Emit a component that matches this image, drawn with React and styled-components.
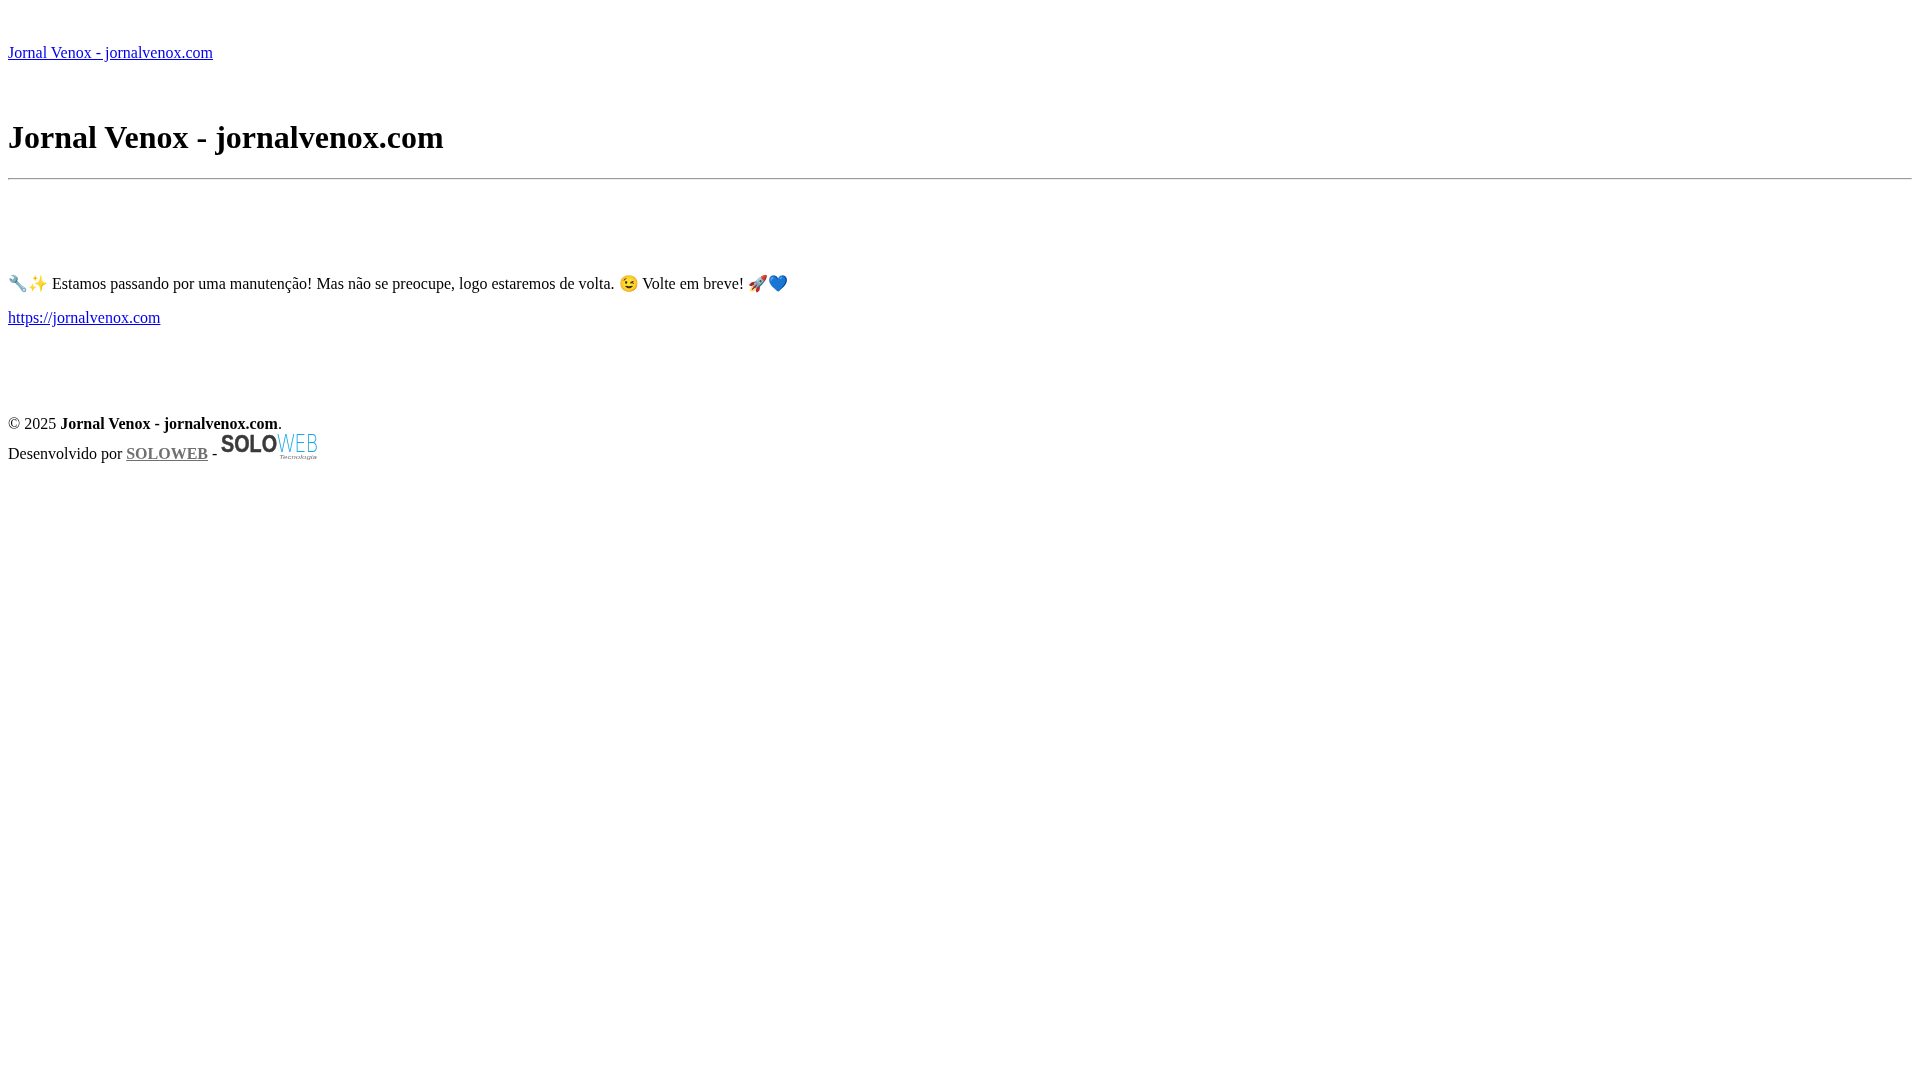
import styled, { createGlobalStyle } from "styled-components";

const Global = createGlobalStyle`
html, body {
  margin: 0;
  background: #fff;
}
body {
  padding: 8px;
  color: #000;
  font-family: "Liberation Serif", "Times New Roman", serif;
  font-size: 16px;
}
#root {
  will-change: transform;
}
`

const Header = styled.header`
padding-top: 36px;
`
const Site = styled.p`
margin: 0;
`
const Title = styled.h1`
margin: 57px 0 0;
font-size: 32px;
font-weight: bold;
line-height: 37px;
`
const Rule = styled.hr`
margin: 22px 0 0;
`
const Main = styled.main`
padding-top: 94px;
`
const Message = styled.p`
margin: 0 0 16px;
`
const Link = styled.a`
color: #00e;
text-decoration: underline;
`
const Footer = styled.footer`
margin-top: 88px;
`
const Dev = styled.a`
color: #707070;
font-weight: bold;
text-decoration: underline;
`
const Logo = styled.svg`
width: 98px;
height: 26px;
overflow: visible;
vertical-align: baseline;
`

const SoloLogo = () => (
    <Logo viewBox="0 0 98 26" role="img" aria-label="Soloweb Tecnologia">
        <text x="0" y="19" fontFamily="Liberation Sans" fontWeight="bold" fontSize="24.5" fill="#3a3a3a" stroke="#3a3a3a" strokeWidth="0.5" textLength="56" lengthAdjust="spacingAndGlyphs">SOLO</text>
        <text x="56" y="19" fontFamily="Inter" fontWeight="200" fontSize="24.5" fill="#1ba8e6" textLength="41" lengthAdjust="spacingAndGlyphs">WEB</text>
        <text x="58" y="25.5" fontFamily="Liberation Sans" fontStyle="italic" fontSize="6" fill="#777" textLength="38" lengthAdjust="spacingAndGlyphs">Tecnologia</text>
    </Logo>
)

const App = () => {
    return (
        <>
            <Global />
            <Header>
                <Site><Link href="#">Jornal Venox - jornalvenox.com</Link></Site>
                <Title>Jornal Venox - jornalvenox.com</Title>
                <Rule />
            </Header>
            <Main>
                <Message>🔧✨ Estamos passando por uma manutenção! Mas não se preocupe, logo estaremos de volta. 😉 Volte em breve! 🚀💙</Message>
                <Message><Link href="#">https://jornalvenox.com</Link></Message>
            </Main>
            <Footer>
                © 2025 <strong>Jornal Venox - jornalvenox.com</strong>.<br />
                Desenvolvido por <Dev href="#">SOLOWEB</Dev> - <SoloLogo />
            </Footer>
        </>
    )
}
export default App
